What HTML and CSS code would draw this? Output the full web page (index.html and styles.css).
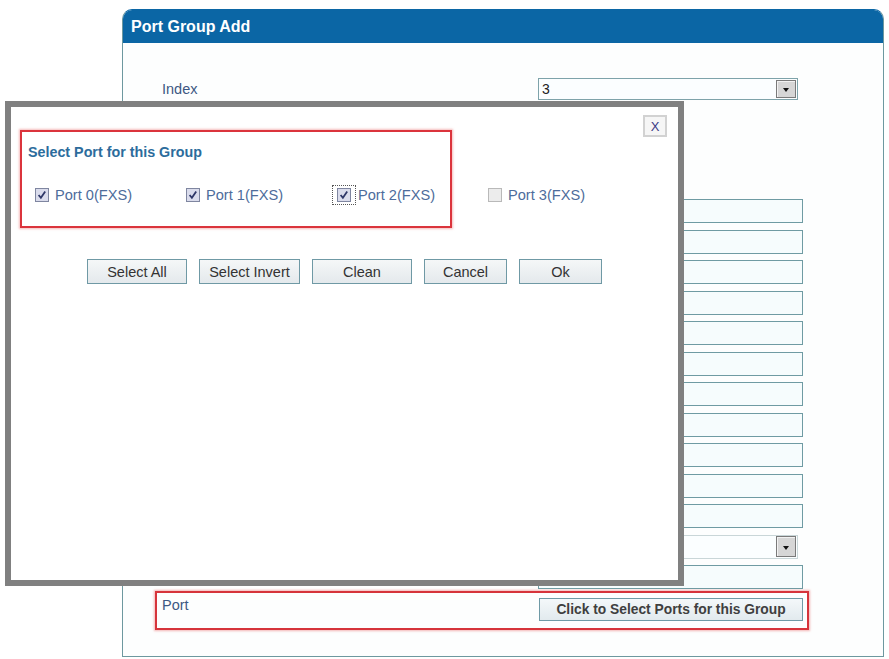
FILE: index.html
```html
<!DOCTYPE html>
<html>
<head>
<meta charset="utf-8">
<title>Port Group Add</title>
<link rel="stylesheet" href="styles.css">
</head>
<body>
<div class="panel">
  <div class="panel-head">Port Group Add</div>
  <div class="panel-body">
    <div class="form-row index-row">
      <span class="label">Index</span>
      <div class="select select-index"><span class="sel-val">3</span><span class="sel-arrow"></span></div>
    </div>
    <div class="fields">
      <span class="input"></span>
      <span class="input"></span>
      <span class="input"></span>
      <span class="input"></span>
      <span class="input"></span>
      <span class="input"></span>
      <span class="input"></span>
      <span class="input"></span>
      <span class="input"></span>
      <span class="input"></span>
      <span class="input"></span>
      <div class="select select-field"><span class="sel-val"></span><span class="sel-arrow"></span></div>
      <span class="input"></span>
    </div>
    <div class="port-row">
      <span class="label port-label">Port</span>
      <button class="pick-btn">Click to Select Ports for this Group</button>
    </div>
  </div>
</div>

<div class="modal">
  <button class="close-btn">X</button>
  <div class="port-box">
    <div class="port-title">Select Port for this Group</div>
    <div class="ports">
      <label class="port-item">
        <svg class="cb" width="14" height="14" viewBox="0 0 14 14"><rect x=".5" y=".5" width="13" height="13" fill="#dadcec" stroke="#7f86a0"/><path d="M3.6 7 L5.9 9.8 L10.2 3.6" fill="none" stroke="#2e3768" stroke-width="1.8"/></svg>
        <span>Port 0(FXS)</span>
      </label>
      <label class="port-item">
        <svg class="cb" width="14" height="14" viewBox="0 0 14 14"><rect x=".5" y=".5" width="13" height="13" fill="#dadcec" stroke="#7f86a0"/><path d="M3.6 7 L5.9 9.8 L10.2 3.6" fill="none" stroke="#2e3768" stroke-width="1.8"/></svg>
        <span>Port 1(FXS)</span>
      </label>
      <label class="port-item">
        <span class="focus-ring"><svg class="cb" width="14" height="14" viewBox="0 0 14 14"><rect x=".5" y=".5" width="13" height="13" fill="#dadcec" stroke="#7f86a0"/><path d="M3.6 7 L5.9 9.8 L10.2 3.6" fill="none" stroke="#2e3768" stroke-width="1.8"/></svg></span>
        <span>Port 2(FXS)</span>
      </label>
      <label class="port-item">
        <svg class="cb" width="14" height="14" viewBox="0 0 14 14"><rect x=".5" y=".5" width="13" height="13" fill="#ececec" stroke="#b9b9b9"/></svg>
        <span>Port 3(FXS)</span>
      </label>
    </div>
  </div>
  <div class="actions">
    <button class="btn w100">Select All</button>
    <button class="btn w101">Select Invert</button>
    <button class="btn w100">Clean</button>
    <button class="btn w83">Cancel</button>
    <button class="btn w83">Ok</button>
  </div>
</div>
</body>
</html>
```

FILE: styles.css
```css
* { box-sizing: border-box; }

body {
  margin: 0;
  background: #ffffff;
  font-family: "Liberation Sans", Arial, sans-serif;
}

/* background panel */
.panel {
  margin: 9px 0 0 122px;
  width: 762px;
  border: 1px solid #6d989f;
  border-top-color: #0b66a5;
  border-radius: 10px 10px 0 0;
  overflow: hidden;
  background: #fdfefe;
}

.panel-head {
  height: 33px;
  line-height: 33px;
  padding-left: 8px;
  background: #0b66a5;
  color: #ffffff;
  font-weight: bold;
  font-size: 16px;
}

.panel-body {
  padding: 35px 0 26px 0;
}

.form-row {
  display: grid;
  grid-template-columns: 376px 265px;
  padding-left: 39px;
}

.label {
  color: #3d5883;
  font-size: 14.5px;
}

.index-row {
  height: 22px;
  align-items: center;
}

.select {
  display: flex;
  align-items: center;
  justify-content: space-between;
  height: 22px;
  border: 1px solid #7ea3aa;
  background: #fbfeff;
  padding: 0 1px 0 3px;
}

.select-index { width: 260px; }

.sel-val {
  font-size: 14px;
  color: #222;
}

.sel-arrow {
  width: 20px;
  height: 18px;
  border: 1px solid #7a7a7a;
  background: #d6d6d6;
  box-shadow: inset 1px 1px 0 #f2f2f2;
  display: flex;
  align-items: center;
  justify-content: center;
}

.sel-arrow::after {
  content: "";
  border-left: 3.5px solid transparent;
  border-right: 3.5px solid transparent;
  border-top: 4px solid #111;
  margin-top: 2px;
}

.fields {
  margin: 99px 0 0 415px;
  display: grid;
  grid-template-rows: repeat(13, 24px);
  row-gap: 6.5px;
  width: 265px;
}

.input {
  display: block;
  height: 24px;
  border: 1px solid #6f9ba3;
  background: #f6fcfd;
}

.select-field {
  width: 260px;
  height: 24px;
  border-color: #c9d6d8;
}

.select-field .sel-arrow { height: 21px; }

.port-row {
  margin: 2px 0 0 32px;
  width: 654px;
  height: 39px;
  border: 2px solid #d6343b;
  box-shadow: 0 0 2px 1px rgba(235, 120, 120, 0.55);
  padding: 5px 0 0 5px;
  display: flex;
  align-items: flex-start;
}

.port-label {
  width: 377px;
  line-height: 14px;
  padding-top: 0;
}

.pick-btn {
  width: 264px;
  height: 23px;
  border: 1px solid #6f9aa6;
  background: linear-gradient(#f4f8fa, #e2eaee);
  font-family: "Liberation Sans", Arial, sans-serif;
  font-size: 13.8px;
  font-weight: bold;
  color: #3f3f3f;
  padding: 0;
}

/* modal overlay */
.modal {
  position: absolute;
  left: 5px;
  top: 101px;
  width: 679px;
  height: 485px;
  background: #ffffff;
  border: 6px solid #808080;
}

.close-btn {
  position: absolute;
  top: 8px;
  right: 11px;
  width: 24px;
  height: 22px;
  border: 2px solid #d2d2d2;
  background: #f6f6f6;
  color: #3a3a86;
  font-family: "Liberation Sans", Arial, sans-serif;
  font-size: 13px;
  padding: 0;
}

.port-box {
  margin: 23px 0 0 9px;
  width: 432px;
  height: 98px;
  border: 2px solid #db343c;
  box-shadow: 0 0 2px 1px rgba(235, 120, 120, 0.5);
  padding: 11px 0 0 6px;
}

.port-title {
  font-size: 14.3px;
  font-weight: bold;
  line-height: 18px;
  color: #2c6c9c;
}

.ports {
  display: flex;
  width: 604px;
  margin: 25px 0 0 7px;
  height: 18px;
}

.port-item {
  width: 151px;
  flex: none;
  display: flex;
  align-items: center;
  font-size: 14.6px;
  color: #4d6c9b;
  white-space: nowrap;
}

.cb {
  flex: none;
  margin-right: 6px;
}

.focus-ring {
  display: flex;
  margin-left: -5px;
  padding: 2px 4px;
  border: 1px dotted #555;
  margin-right: 2px;
}

.focus-ring .cb { margin-right: 0; }

.actions {
  margin-top: 31px;
  display: flex;
  justify-content: center;
  gap: 12px;
}

.btn {
  height: 25px;
  border: 1px solid #6f99a5;
  background: linear-gradient(#f5f7f8, #e4e9ec);
  font-family: "Liberation Sans", Arial, sans-serif;
  font-size: 14.5px;
  color: #333333;
  padding: 0;
}

.w100 { width: 100px; }
.w101 { width: 101px; }
.w83 { width: 83px; }
```
